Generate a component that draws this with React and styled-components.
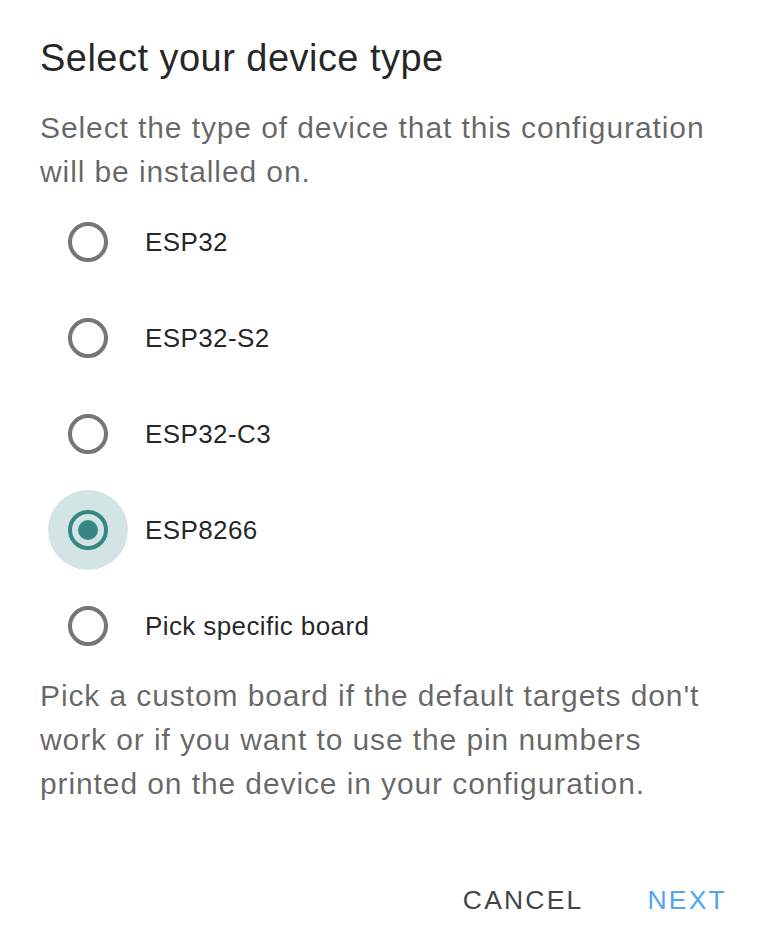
import React, { useState } from "react";
import styled, { createGlobalStyle } from "styled-components";

const GlobalStyle = createGlobalStyle`
  html, body {
    margin: 0;
    padding: 0;
    background: #ffffff;
  }

  body {
    font-family: "Liberation Sans", Arial, sans-serif;
    -webkit-font-smoothing: antialiased;
  }
`;

const DialogSurface = styled.div`
  width: 758px;
  box-sizing: border-box;
  padding: 34px 38px 0 40px;
  background: #ffffff;
`;

const DialogTitle = styled.h2`
  margin: 0;
  font-size: 38px;
  line-height: 48px;
  font-weight: 400;
  letter-spacing: 0.47px;
  color: rgba(0, 0, 0, 0.87);
`;

const DialogText = styled.p`
  margin: 0;
  margin-top: ${({ $gap }) => $gap || 0}px;
  font-size: 30px;
  line-height: 44px;
  letter-spacing: 0.9px;
  color: rgba(0, 0, 0, 0.6);
`;

const RadioList = styled.div`
  display: flex;
  flex-direction: column;
  padding-left: 8px;
`;

const RadioRow = styled.label`
  display: flex;
  align-items: center;
  height: 96px;
  cursor: pointer;
`;

const RadioHalo = styled.span`
  display: flex;
  align-items: center;
  justify-content: center;
  width: 80px;
  height: 80px;
  border-radius: 50%;
  background: ${({ $checked }) => ($checked ? "#d2e5e4" : "transparent")};
`;

const RadioRing = styled.span`
  display: flex;
  align-items: center;
  justify-content: center;
  width: 40px;
  height: 40px;
  box-sizing: border-box;
  border-radius: 50%;
  border: 4px solid ${({ $checked }) => ($checked ? "#388681" : "#767676")};
`;

const RadioDot = styled.span`
  width: 20px;
  height: 20px;
  border-radius: 50%;
  background: #388681;
`;

const RadioLabel = styled.span`
  padding-left: 17px;
  font-size: 26px;
  letter-spacing: 0.4px;
  color: rgba(0, 0, 0, 0.87);
`;

const DialogActions = styled.div`
  display: flex;
  justify-content: flex-end;
  gap: 34px;
  margin-top: 58px;
  margin-right: -22px;
`;

const ActionButton = styled.button`
  height: 72px;
  padding: 0 15px;
  border: none;
  background: transparent;
  font-family: "Liberation Sans", Arial, sans-serif;
  font-size: 26.5px;
  line-height: 72px;
  letter-spacing: 2.2px;
  text-transform: uppercase;
  color: ${({ $primary }) => ($primary ? "#4ea6f0" : "#454545")};
  cursor: pointer;
`;

const deviceTypes = ["ESP32", "ESP32-S2", "ESP32-C3", "ESP8266", "Pick specific board"];

export default function App() {
  const [selected, setSelected] = useState("ESP8266");

  return (
    <>
      <GlobalStyle />
      <DialogSurface>
        <DialogTitle>Select your device type</DialogTitle>
        <DialogText $gap={24}>
          Select the type of device that this configuration will be installed on.
        </DialogText>
        <RadioList>
          {deviceTypes.map((type) => {
            const checked = type === selected;
            return (
              <RadioRow key={type} onClick={() => setSelected(type)}>
                <RadioHalo $checked={checked}>
                  <RadioRing $checked={checked}>{checked && <RadioDot />}</RadioRing>
                </RadioHalo>
                <RadioLabel>{type}</RadioLabel>
              </RadioRow>
            );
          })}
        </RadioList>
        <DialogText>
          Pick a custom board if the default targets don't work or if you want to use the pin
          numbers printed on the device in your configuration.
        </DialogText>
        <DialogActions>
          <ActionButton>Cancel</ActionButton>
          <ActionButton $primary>Next</ActionButton>
        </DialogActions>
      </DialogSurface>
    </>
  );
}
